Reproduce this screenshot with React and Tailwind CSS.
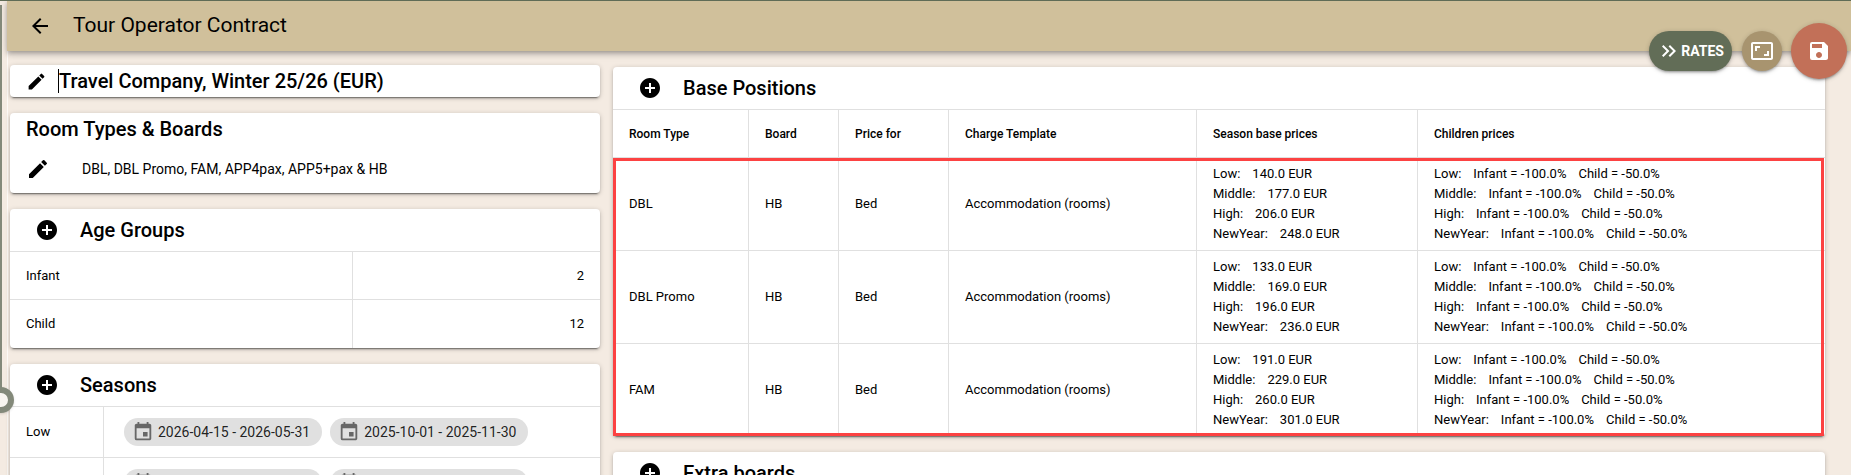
import React from "react";
import {
  MdAddCircle,
  MdArrowBack,
  MdAspectRatio,
  MdEdit,
  MdEvent,
  MdKeyboardDoubleArrowRight,
  MdSave,
} from "react-icons/md";

const ageGroups = [
  {name: "Infant", age: 2},
  {name: "Child", age: 12},
];

const seasons = [
  {name: "Low", periods: ["2026-04-15 - 2026-05-31", "2025-10-01 - 2025-11-30"]},
  {name: "Middle", periods: ["2026-06-01 - 2026-06-30", "2025-12-01 - 2025-12-20"]},
];

const positions = [
  {room: "DBL", prices: {Low: "140.0", Middle: "177.0", High: "206.0", NewYear: "248.0"}},
  {room: "DBL Promo", prices: {Low: "133.0", Middle: "169.0", High: "196.0", NewYear: "236.0"}},
  {room: "FAM", prices: {Low: "191.0", Middle: "229.0", High: "260.0", NewYear: "301.0"}},
];

const headers = [
  {label: "Room Type", width: "w-[136px]"},
  {label: "Board", width: "w-[90px]"},
  {label: "Price for", width: "w-[110px]"},
  {label: "Charge Template", width: "w-[248px]"},
  {label: "Season base prices", width: "w-[221px]"},
  {label: "Children prices", width: ""},
];

const cardShadow =
  "shadow-[0_1px_5px_rgba(0,0,0,0.2),0_2px_2px_rgba(0,0,0,0.14),0_3px_1px_-2px_rgba(0,0,0,0.35)]";
const buttonShadow =
  "shadow-[0_1px_5px_rgba(0,0,0,0.2),0_2px_2px_rgba(0,0,0,0.14),0_3px_1px_-2px_rgba(0,0,0,0.12)]";

function Card({children}) {
  return <section className={`rounded bg-white ${cardShadow}`}>{children}</section>;
}

function CardHeader({title}) {
  return (
    <div className="flex h-[43px] items-center gap-[21px] border-b border-[#e0e0e0] pl-[25px]">
      <button aria-label={`Add ${title}`} className="cursor-pointer">
        <MdAddCircle size={24} />
      </button>
      <h2 className="text-xl font-medium">{title}</h2>
    </div>
  );
}

function Chip({label}) {
  return (
    <div className="flex h-7 items-center gap-1 rounded-full bg-[#e0e0e0] pr-3 pl-2 text-sm whitespace-nowrap text-black/87">
      <MdEvent size={22} className="text-black/54" />
      {label}
    </div>
  );
}

function App() {
  return (
    <div className="flex h-screen overflow-hidden bg-[#f4ebe2] font-[Roboto,sans-serif] text-black">
      {/* collapsed drawer */}
      <aside className="relative z-20 w-[7px] shrink-0 border-t border-[#5f6c56]">
        <div className="mt-1 h-[390px] w-[2px] bg-[#83897a]" />
        <button
          aria-label="Open menu"
          className="absolute top-[386px] -left-3 size-[26px] rounded-full border-[6px] border-[#83897a] bg-[#f8f5f0] shadow"
        />
      </aside>

      <div className="flex min-w-0 flex-1 flex-col">
        <header className="relative z-10 flex h-[51px] shrink-0 items-center gap-[21px] border-t border-[#5f6c56] bg-[#d0c09b] pl-[21px] shadow-[0_2px_4px_-1px_rgba(0,0,0,0.2),0_4px_5px_rgba(0,0,0,0.14),0_1px_10px_rgba(0,0,0,0.12)]">
          <button aria-label="Back" className="cursor-pointer">
            <MdArrowBack size={24} />
          </button>
          <h1 className="text-[21px]">Tour Operator Contract</h1>
          {/* floating actions, hang over the bottom edge of the bar */}
          <div className="absolute top-[22px] right-1 flex items-center">
            <button
              className={`mr-[10px] flex h-10 cursor-pointer items-center rounded-full bg-[#626d57] px-2 text-sm font-bold text-white ${buttonShadow}`}
            >
              <MdKeyboardDoubleArrowRight size={24} />
              RATES
            </button>
            <button
              aria-label="Fullscreen"
              className={`mr-[9px] flex size-10 cursor-pointer items-center justify-center rounded-full bg-[#a8946f] text-white ${buttonShadow}`}
            >
              <MdAspectRatio size={24} />
            </button>
            <button
              aria-label="Save"
              className={`flex size-14 cursor-pointer items-center justify-center rounded-full bg-[#c27058] text-white ${buttonShadow}`}
            >
              <MdSave size={24} />
            </button>
          </div>
        </header>

        <main className="flex items-start gap-[13px] border-l border-white/70 pr-[26px] pl-[2px]">
          <div className="flex w-[590px] shrink-0 flex-col gap-4 pt-[14px]">
            <Card>
              <div className="flex h-8 items-center pl-4">
                <button aria-label="Edit name" className="mr-[11px] cursor-pointer">
                  <MdEdit size={21} />
                </button>
                <span className="h-6 w-px bg-black" />
                <input
                  aria-label="Contract name"
                  defaultValue="Travel Company, Winter 25/26 (EUR)"
                  className="h-8 min-w-0 flex-1 text-xl font-medium outline-none"
                />
              </div>
            </Card>

            <Card>
              <div className="h-20 pl-4">
                <h2 className="text-xl leading-8 font-medium">Room Types &amp; Boards</h2>
                <div className="flex h-12 items-center gap-8">
                  <button aria-label="Edit room types" className="cursor-pointer">
                    <MdEdit size={24} />
                  </button>
                  <p className="text-sm">DBL, DBL Promo, FAM, APP4pax, APP5+pax &amp; HB</p>
                </div>
              </div>
            </Card>

            <Card>
              <CardHeader title="Age Groups" />
              <table className="w-full table-fixed border-separate border-spacing-0 text-[13px]">
                <tbody>
                  {ageGroups.map((group) => (
                    <tr
                      key={group.name}
                      className="h-12 [&:not(:last-child)>td]:border-b [&>td]:border-[#e0e0e0]"
                    >
                      <td className="w-[343px] border-r px-4">{group.name}</td>
                      <td className="px-4 text-right">{group.age}</td>
                    </tr>
                  ))}
                </tbody>
              </table>
            </Card>

            <Card>
              <CardHeader title="Seasons" />
              <table className="w-full table-fixed border-separate border-spacing-0 text-[13px]">
                <tbody>
                  {seasons.map((season) => (
                    <tr key={season.name} className="h-[51px] [&>td]:border-b [&>td]:border-[#e0e0e0]">
                      <td className="w-[94px] border-r px-4">{season.name}</td>
                      <td className="pl-5">
                        <div className="flex gap-2">
                          {season.periods.map((period) => (
                            <Chip key={period} label={period} />
                          ))}
                        </div>
                      </td>
                    </tr>
                  ))}
                </tbody>
              </table>
            </Card>
          </div>

          <div className="flex min-w-0 flex-1 flex-col gap-4 pt-4">
            <Card>
              <CardHeader title="Base Positions" />
              <div className="relative">
                <table className="w-full table-fixed border-separate border-spacing-0 text-left text-[13px]">
                  <thead>
                    <tr className="h-12 text-xs">
                      {headers.map((header) => (
                        <th
                          key={header.label}
                          className={`border-r border-b border-[#e0e0e0] px-4 font-medium last:border-r-0 ${header.width}`}
                        >
                          {header.label}
                        </th>
                      ))}
                    </tr>
                  </thead>
                  <tbody>
                    {positions.map((position) => (
                      <tr
                        key={position.room}
                        className="[&:not(:last-child)>td]:border-b [&>td]:border-[#e0e0e0] [&>td]:px-4 [&>td]:py-[6px] [&>td:not(:last-child)]:border-r"
                      >
                        <td>{position.room}</td>
                        <td>HB</td>
                        <td>Bed</td>
                        <td>Accommodation (rooms)</td>
                        <td className="leading-5">
                          {Object.entries(position.prices).map(([season, price]) => (
                            <div key={season} className="flex gap-3">
                              <span>{season}:</span>
                              <span>{price} EUR</span>
                            </div>
                          ))}
                        </td>
                        <td className="leading-5">
                          {Object.keys(position.prices).map((season) => (
                            <div key={season} className="flex gap-3">
                              <span>{season}:</span>
                              <span>Infant = -100.0%</span>
                              <span>Child = -50.0%</span>
                            </div>
                          ))}
                        </td>
                      </tr>
                    ))}
                  </tbody>
                </table>
                {/* highlight around the positions */}
                <div className="pointer-events-none absolute top-12 right-px bottom-0 left-0 border-[3px] border-[#fc4242]" />
              </div>
            </Card>

            <Card>
              <CardHeader title="Extra boards" />
            </Card>
          </div>
        </main>
      </div>
    </div>
  );
}

export default App;
